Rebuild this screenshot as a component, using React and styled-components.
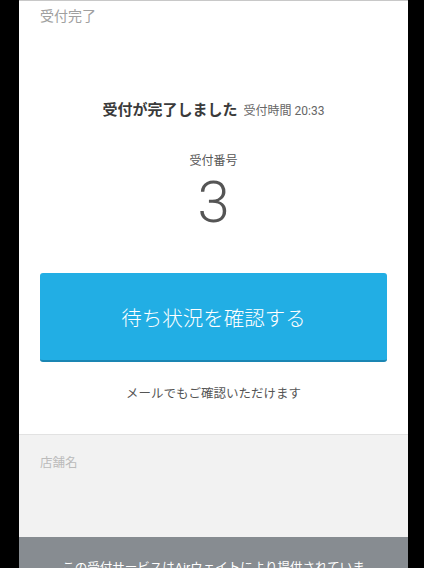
import React from 'react';
import styled, {createGlobalStyle} from "styled-components";

const GlobalStyle = createGlobalStyle`
    html, body {
        margin: 0;
        padding: 0;
        background: #000;
    }
    body {
        font-family: Roboto, "Noto Sans CJK JP", sans-serif;
    }
`;

function App(){
    return(
        <>
            <GlobalStyle/>
            <Page>
                <Column>
                    <Header>受付完了</Header>
                    <Main>
                        <TitleRow>
                            <Title>受付が完了しました</Title>
                            <Time>受付時間 20:33</Time>
                        </TitleRow>
                        <Label>受付番号</Label>
                        <Number>3</Number>
                        <Button type="button">待ち状況を確認する</Button>
                        <Note>メールでもご確認いただけます</Note>
                    </Main>
                    <ShopSection>
                        <ShopName>店舗名</ShopName>
                    </ShopSection>
                    <Footer>
                        <FooterText>この受付サービスはAirウェイトにより提供されています</FooterText>
                    </Footer>
                </Column>
            </Page>
        </>
    )
}

const Page = styled.div`
    display: flex;
    height: 568px;
    overflow: hidden;
    padding-left: 19px;
`;
const Column = styled.div`
    display: flex;
    flex-direction: column;
    width: 389px;
    background: #fff;
    border-top: 1px solid #c8c8c8;
    & > * {
        flex-shrink: 0;
    }
`;
const Header = styled.div`
    padding: 5px 21px 0;
    font-size: 14px;
    line-height: 20px;
    color: #a0a0a0;
`;
const Main = styled.div`
    display: flex;
    flex-direction: column;
    align-items: center;
    padding: 0 21px 31px;
`;
const TitleRow = styled.div`
    display: flex;
    align-items: baseline;
    gap: 6px;
    margin-top: 73px;
    line-height: 22px;
`;
const Title = styled.span`
    font-size: 15px;
    font-weight: 700;
    color: #3a3a3a;
`;
const Time = styled.span`
    font-size: 12px;
    color: #666;
`;
const Label = styled.div`
    margin-top: 30px;
    font-size: 12px;
    line-height: 18px;
    color: #555;
`;
const Number = styled.div`
    margin-top: 2px;
    font-size: 58px;
    line-height: 60px;
    font-weight: 300;
    color: #555;
`;
const Button = styled.button`
    margin-top: 41px;
    width: 100%;
    height: 89px;
    border: none;
    border-bottom: 2px solid #1a86b3;
    border-radius: 3px;
    background: #22aee4;
    color: #fff;
    font-family: "Noto Sans CJK JP", sans-serif;
    font-size: 20.5px;
    font-weight: 300;
    cursor: pointer;
`;
const Note = styled.div`
    margin-top: 23px;
    font-size: 12.5px;
    line-height: 18px;
    color: #555;
`;
const ShopSection = styled.div`
    height: 103px;
    box-sizing: border-box;
    padding: 19px 21px 0;
    background: #f2f2f2;
    border-top: 1px solid #e2e2e2;
`;
const ShopName = styled.div`
    font-size: 12.5px;
    line-height: 18px;
    color: #bbb;
`;
const Footer = styled.div`
    flex: 1 0 auto;
    padding: 21px 39px 0;
    background: #878c91;
    text-align: center;
`;
const FooterText = styled.div`
    font-size: 12.5px;
    line-height: 20px;
    color: #fff;
`;

export default App
